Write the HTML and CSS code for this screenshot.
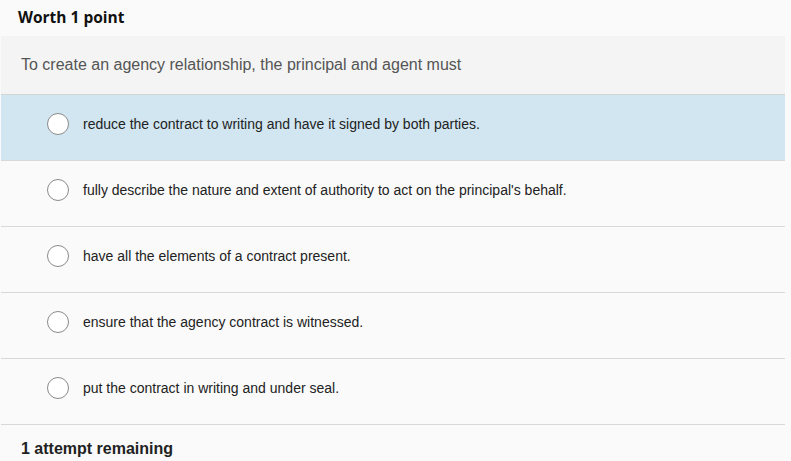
FILE: index.html
```html
<!DOCTYPE html>
<html lang="en">
<head>
    <meta charset="UTF-8">
    <meta name="viewport" content="width=device-width, initial-scale=1.0">
    <title>Quiz Question</title>
    <link rel="stylesheet" href="styles.css">
</head>
<body>
    <div class="quiz">
        <!-- Points -->
        <div class="points">Worth 1 point</div>

        <!-- Question -->
        <div class="question">To create an agency relationship, the principal and agent must</div>

        <!-- Answer options -->
        <div class="options">
            <label class="option selected">
                <span class="radio"></span>
                <span class="option-text">reduce the contract to writing and have it signed by both parties.</span>
            </label>
            <label class="option">
                <span class="radio"></span>
                <span class="option-text">fully describe the nature and extent of authority to act on the principal's behalf.</span>
            </label>
            <label class="option">
                <span class="radio"></span>
                <span class="option-text">have all the elements of a contract present.</span>
            </label>
            <label class="option">
                <span class="radio"></span>
                <span class="option-text">ensure that the agency contract is witnessed.</span>
            </label>
            <label class="option">
                <span class="radio"></span>
                <span class="option-text">put the contract in writing and under seal.</span>
            </label>
        </div>

        <!-- Attempts -->
        <div class="attempts">1 attempt remaining</div>
    </div>
</body>
</html>
```

FILE: styles.css
```css
/* General Styles */
body {
    font-family: "Liberation Sans", Arial, sans-serif;
    background-color: #fafafa;
    color: #222;
    margin: 0;
}

.quiz {
    width: 784px;
    margin-left: 1px;
}

.points {
    font-family: "Open Sans", sans-serif;
    font-weight: 700;
    font-size: 15.5px;
    line-height: 20px;
    height: 36px;
    box-sizing: border-box;
    padding: 7px 17px 0;
    color: #111;
}

.question {
    background-color: #f4f4f4;
    height: 58px;
    display: flex;
    align-items: center;
    padding: 0 20px;
    font-size: 16px;
    color: #555;
    border-bottom: 1px solid #d4d4d4;
}

.option {
    display: flex;
    align-items: center;
    height: 66px;
    box-sizing: border-box;
    padding: 0 0 8px 46px;
    border-bottom: 1px solid #d9d9d9;
    font-size: 14px;
    color: #222;
    cursor: pointer;
}

.option.selected {
    background-color: #d1e6f1;
}

.radio {
    width: 20px;
    height: 20px;
    border: 1px solid #8a8a8a;
    border-radius: 50%;
    background-color: #fff;
    flex-shrink: 0;
    margin-right: 14px;
}

.attempts {
    font-weight: 700;
    font-size: 16px;
    padding: 15px 20px 0;
    color: #222;
}
```
